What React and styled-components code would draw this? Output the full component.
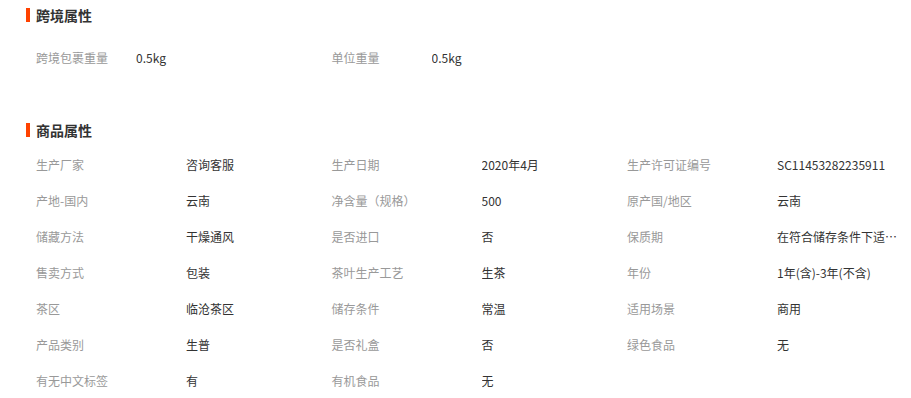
import React from "react";
import styled, { createGlobalStyle } from "styled-components";

const GlobalStyle = createGlobalStyle`
  html, body { margin: 0; padding: 0; background: #fff; }
  body { font-family: "Microsoft YaHei", "Noto Sans CJK SC", "Noto Sans", sans-serif; }
`;

const Page = styled.div`
  width: 911px;
  height: 398px;
  overflow: hidden;
  padding-left: 26px;
  box-sizing: border-box;
`;

const Section = styled.section`
  margin-top: ${(p) => p.$top || 0}px;
`;

const Title = styled.h3`
  display: flex;
  align-items: center;
  gap: 6px;
  margin: 0;
  height: 30px;
  font-size: 14px;
  font-weight: bold;
  color: #333;
  &::before {
    content: "";
    display: block;
    width: 4px;
    height: 14px;
    background: #ff4200;
  }
`;

const Grid = styled.div`
  display: grid;
  grid-template-columns: repeat(3, 295.5px);
  padding-left: 10px;
  padding-top: ${(p) => p.$pad || 0}px;
`;

const Item = styled.div`
  display: flex;
  align-items: center;
  height: 36px;
  font-size: 12px;
  min-width: 0;
`;

const Label = styled.span`
  flex: 0 0 ${(p) => p.$w}px;
  color: #999;
  white-space: nowrap;
`;

const Value = styled.span`
  color: #333;
  width: 124px;
  white-space: nowrap;
  overflow: hidden;
  text-overflow: ellipsis;
`;

const cross = [
  ["跨境包裹重量", "0.5kg"],
  ["单位重量", "0.5kg"],
];

const props = [
  ["生产厂家", "咨询客服"],
  ["生产日期", "2020年4月"],
  ["生产许可证编号", "SC11453282235911"],
  ["产地-国内", "云南"],
  ["净含量（规格）", "500"],
  ["原产国/地区", "云南"],
  ["储藏方法", "干燥通风"],
  ["是否进口", "否"],
  ["保质期", "在符合储存条件下适宜长期保存"],
  ["售卖方式", "包装"],
  ["茶叶生产工艺", "生茶"],
  ["年份", "1年(含)-3年(不含)"],
  ["茶区", "临沧茶区"],
  ["储存条件", "常温"],
  ["适用场景", "商用"],
  ["产品类别", "生普"],
  ["是否礼盒", "否"],
  ["绿色食品", "无"],
  ["有无中文标签", "有"],
  ["有机食品", "无"],
];

export default function App() {
  return (
    <Page>
      <GlobalStyle />
      <Section>
        <Title>跨境属性</Title>
        <Grid $pad={9}>
          {cross.map(([k, v]) => (
            <Item key={k}>
              <Label $w={100}>{k}</Label>
              <Value>{v}</Value>
            </Item>
          ))}
        </Grid>
      </Section>
      <Section $top={40}>
        <Title>商品属性</Title>
        <Grid $pad={1}>
          {props.map(([k, v]) => (
            <Item key={k}>
              <Label $w={150}>{k}</Label>
              <Value>{v}</Value>
            </Item>
          ))}
        </Grid>
      </Section>
    </Page>
  );
}
